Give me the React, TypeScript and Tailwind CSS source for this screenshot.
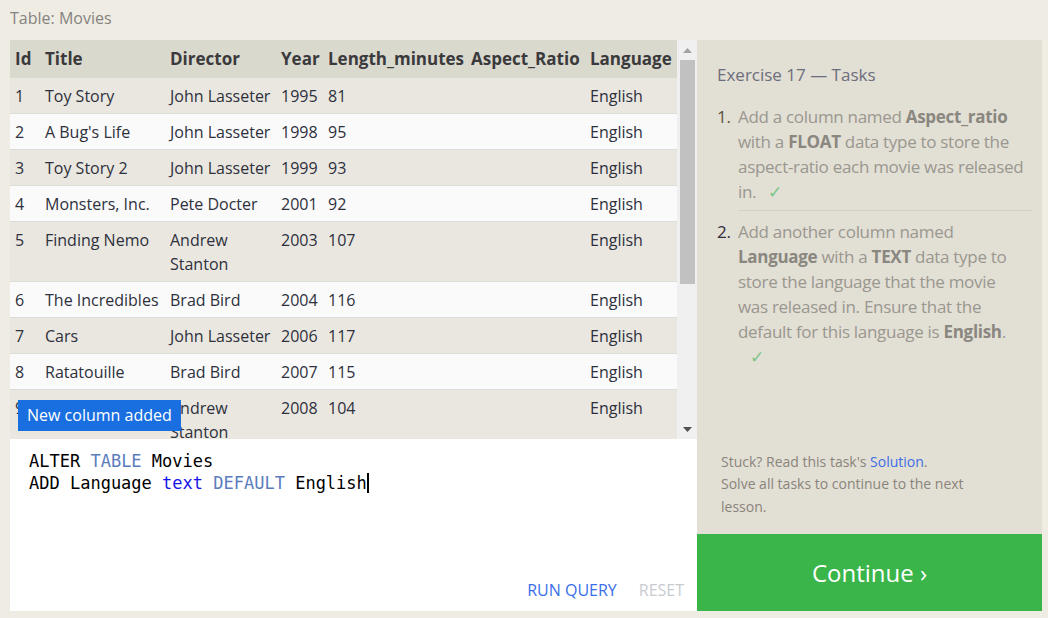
const rows = [
    { id: 1, title: 'Toy Story', director: 'John Lasseter', year: 1995, length: 81 },
    { id: 2, title: "A Bug's Life", director: 'John Lasseter', year: 1998, length: 95 },
    { id: 3, title: 'Toy Story 2', director: 'John Lasseter', year: 1999, length: 93 },
    { id: 4, title: 'Monsters, Inc.', director: 'Pete Docter', year: 2001, length: 92 },
    { id: 5, title: 'Finding Nemo', director: 'Andrew Stanton', year: 2003, length: 107 },
    { id: 6, title: 'The Incredibles', director: 'Brad Bird', year: 2004, length: 116 },
    { id: 7, title: 'Cars', director: 'John Lasseter', year: 2006, length: 117 },
    { id: 8, title: 'Ratatouille', director: 'Brad Bird', year: 2007, length: 115 },
    { id: 9, title: 'WALL-E', director: 'Andrew Stanton', year: 2008, length: 104 },
];

const cols = ['Id', 'Title', 'Director', 'Year', 'Length_minutes', 'Aspect_Ratio', 'Language'];
const widths = ['w-[30px]', 'w-[125px]', 'w-[111px]', 'w-[47px]', 'w-[143px]', 'w-[119px]', 'w-[92px]'];

const Check = () => <span className="text-[#7cc58a] ml-3">✓</span>;

const App = () => {
    return (
        <div
            className="w-[1048px] h-[618px] bg-[#efece4] overflow-hidden"
            style={{ fontFamily: '"Open Sans", "Noto Sans", sans-serif' }}
        >
            <div className="h-[40px] pl-[10px] pt-[6px] text-[16px] text-[#85837f]">Table: Movies</div>
            <div className="flex h-[571px]">
                {/* left: table + editor */}
                <div className="w-[687px] ml-[10px] flex flex-col">
                    <div className="relative h-[399px] flex bg-[#fafafa]">
                        <div className="w-[667px] overflow-hidden">
                            <table className="table-fixed border-collapse w-[667px] text-[16px] text-[#2e303c]">
                                <thead>
                                    <tr className="bg-[#dad9ce] h-[38px]">
                                        {cols.map((c, i) => (
                                            <th key={c} className={`${widths[i]} text-left font-bold pl-[5px] pr-0 text-[17px] text-[#3a3a3c] leading-[24px]`}>
                                                {c}
                                            </th>
                                        ))}
                                    </tr>
                                </thead>
                                <tbody>
                                    {rows.map((r, i) => (
                                        <tr
                                            key={r.id}
                                            className={`${i % 2 === 0 ? 'bg-[#e9e7e0]' : 'bg-[#fafafa]'} border-b border-[#dcdcd8] align-top`}
                                        >
                                            <td className="pl-[5px] pt-[6px] pb-[5px] leading-[24px]">{r.id}</td>
                                            <td className="pl-[5px] pt-[6px] pb-[5px] leading-[24px]">{r.title}</td>
                                            <td className="pl-[5px] pt-[6px] pb-[5px] leading-[24px]">{r.director}</td>
                                            <td className="pl-[5px] pt-[6px] pb-[5px] leading-[24px]">{r.year}</td>
                                            <td className="pl-[5px] pt-[6px] pb-[5px] leading-[24px]">{r.length}</td>
                                            <td className="pl-[5px] pt-[6px] pb-[5px] leading-[24px]"></td>
                                            <td className="pl-[5px] pt-[6px] pb-[5px] leading-[24px]">English</td>
                                        </tr>
                                    ))}
                                </tbody>
                            </table>
                        </div>
                        {/* scrollbar */}
                        <div className="w-[20px] bg-[#f0f0f0] flex flex-col items-center">
                            <div className="h-[20px] flex items-center justify-center">
                                <svg width="9" height="5" viewBox="0 0 9 5">
                                    <path d="M0 5 L4.5 0 L9 5 Z" fill="#a3a3a3" />
                                </svg>
                            </div>
                            <div className="w-[15px] h-[224px] bg-[#c1c1c1]" />
                            <div className="flex-1" />
                            <div className="h-[20px] flex items-center justify-center">
                                <svg width="9" height="5" viewBox="0 0 9 5">
                                    <path d="M0 0 L4.5 5 L9 0 Z" fill="#505050" />
                                </svg>
                            </div>
                        </div>
                        <div className="absolute left-[8px] top-[360px] bg-[#1a6fe0] text-white text-[16px] leading-[31px] px-[9px]">
                            New column added
                        </div>
                    </div>
                    <div className="flex-1 bg-white flex flex-col">
                        <div
                            className="pl-[19px] pt-[11px] text-[17px] leading-[22px] text-black"
                            style={{ fontFamily: '"DejaVu Sans Mono", "Liberation Mono", monospace' }}
                        >
                            <div>
                                ALTER <span className="text-[#5b7dbd]">TABLE</span> Movies
                            </div>
                            <div>
                                ADD Language <span className="text-[#1515e8]">text</span>{' '}
                                <span className="text-[#5b7dbd]">DEFAULT</span> English
                                <span className="inline-block w-[2px] h-[20px] bg-black align-[-4px]" />
                            </div>
                        </div>
                        <div className="flex-1" />
                        <div className="flex justify-end items-center gap-[22px] pr-[13px] pb-[9px] text-[16px]">
                            <span className="text-[#3a6ee8]">RUN QUERY</span>
                            <span className="text-[#c8cbd0]">RESET</span>
                        </div>
                    </div>
                </div>
                {/* right: tasks */}
                <div className="w-[345px] bg-[#e2dfd5] flex flex-col">
                    <div className="pl-[20px] pr-[10px] pt-[23px] flex-1">
                        <div className="text-[17px] text-[#6c6e7c] leading-[24px]">Exercise 17 — Tasks</div>
                        <ol className="mt-[17px] text-[17px] leading-[25px] text-[#9a978f] tracking-[-0.3px]">
                            <li className="flex">
                                <span className="text-[#5b5240] w-[21px] shrink-0">1.</span>
                                <span className="pb-[6px] border-b border-[#d4d1c6] flex-1 whitespace-nowrap">
                                    Add a column named <b className="text-[#8a8780]">Aspect_ratio</b>
                                    <br />
                                    with a <b className="text-[#8a8780]">FLOAT</b> data type to store the
                                    <br />
                                    aspect-ratio each movie was released
                                    <br />
                                    in.
                                    <Check />
                                </span>
                            </li>
                            <li className="flex pt-[8px]">
                                <span className="text-[#2e2e3a] w-[21px] shrink-0">2.</span>
                                <span className="flex-1 whitespace-nowrap">
                                    Add another column named
                                    <br />
                                    <b className="text-[#8a8780]">Language</b> with a <b className="text-[#8a8780]">TEXT</b> data type to
                                    <br />
                                    store the language that the movie
                                    <br />
                                    was released in. Ensure that the
                                    <br />
                                    default for this language is <b className="text-[#8a8780]">English</b>.
                                    <br />
                                    <Check />
                                </span>
                            </li>
                        </ol>
                    </div>
                    <div className="pl-[24px] pr-[60px] pb-[16px] text-[14px] leading-[22.5px] text-[#8a847b]">
                        Stuck? Read this task's <span className="text-[#3d6ee6]">Solution</span>.
                        <br />
                        Solve all tasks to continue to the next lesson.
                    </div>
                    <div className="h-[77px] bg-[#3ab54a] flex items-center justify-center text-white text-[24px]">
                        Continue ›
                    </div>
                </div>
            </div>
        </div>
    );
};

export default App;
